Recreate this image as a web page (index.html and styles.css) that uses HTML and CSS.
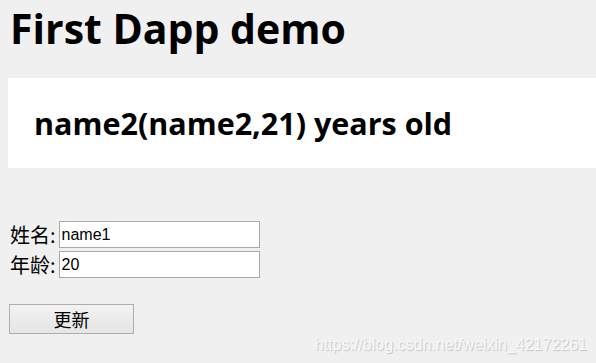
FILE: index.html
```html
<!DOCTYPE html>
<html lang="en">
<head>
    <meta charset="UTF-8">
    <title>First Dapp demo</title>
    <link rel="stylesheet" href="styles.css">
</head>
<body>
    <h1 class="title">First Dapp demo</h1>
    <div class="info">
        <h2 id="info">name2(name2,21) years old</h2>
    </div>
    <form class="form">
        <div class="row">
            <label for="name">姓名:</label>
            <input id="name" type="text" value="name1">
        </div>
        <div class="row">
            <label for="age">年龄:</label>
            <input id="age" type="text" value="20">
        </div>
        <button type="button" id="button">更新</button>
    </form>
    <div class="watermark">https://blog.csdn.net/weixin_42172261</div>
</body>
</html>
```

FILE: styles.css
```css
body {
    background-color: #f0f0f0;
    color: black;
    margin: 0;
    padding: 0 10px;
    font-family: "Open Sans", "Noto Sans", sans-serif;
}
.title {
    margin: 0;
    padding-top: 2px;
    font-size: 41px;
    font-weight: bold;
    line-height: 52px;
}
.info {
    background-color: white;
    margin: 24px -10px 0 -2px;
    padding: 0 26px;
    height: 90px;
    display: flex;
    align-items: center;
}
.info h2 {
    margin: 0;
    font-size: 30.5px;
    font-weight: bold;
}
.form {
    margin-top: 53px;
    font-family: "Noto Sans CJK SC", sans-serif;
    font-size: 20px;
}
.row {
    display: flex;
    align-items: center;
    gap: 3px;
    margin-bottom: 3px;
}
.row label {
    line-height: 26px;
}
.row input {
    width: 201px;
    height: 27px;
    box-sizing: border-box;
    border: 1px solid #a9a9a9;
    padding: 0 2px;
    margin: 0;
    font-family: "Liberation Sans", Arial, sans-serif;
    font-size: 16px;
    background: white;
}
#button {
    margin: 23px 0 0 -1px;
    width: 125px;
    height: 30px;
    border: 1px solid #adadad;
    border-radius: 0;
    background: linear-gradient(#f2f2f2, #e5e5e5);
    font-family: "Noto Sans CJK SC", sans-serif;
    font-size: 18px;
    padding: 0;
}
.watermark {
    position: absolute;
    right: 9px;
    bottom: 9px;
    font-family: "Liberation Sans", Arial, sans-serif;
    font-size: 16px;
    color: #f8f8f8;
    text-shadow: 1px 1px 1px #c4c4c4;
}
```
